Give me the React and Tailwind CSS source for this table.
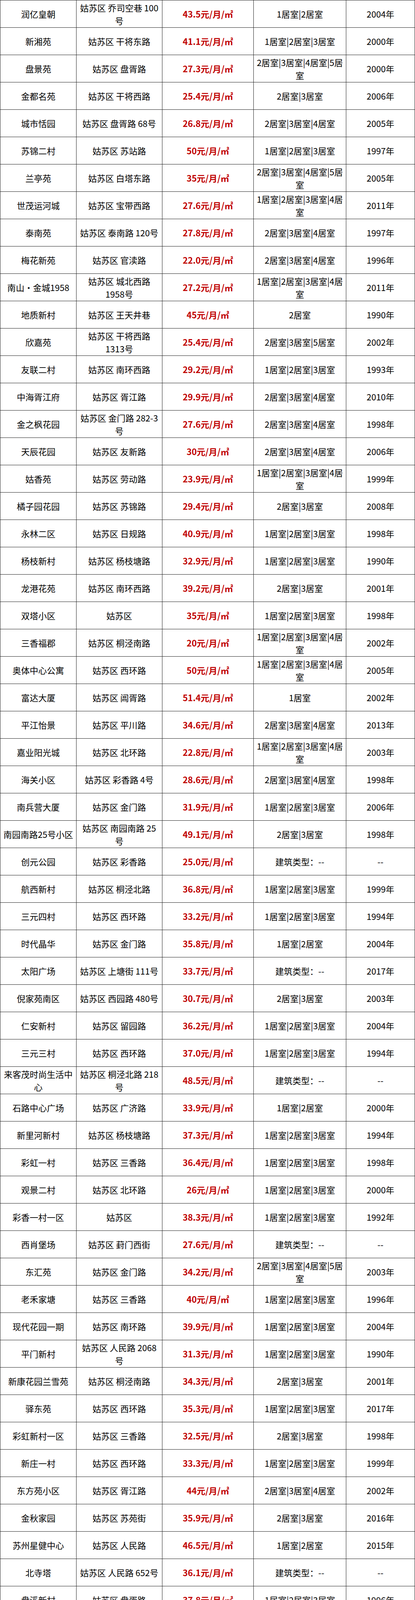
import React from 'react';

// name, address, rent per m², rooms (digits = N居室, otherwise literal), year
const rows = [
  ['润亿皇朝', '姑苏区 乔司空巷 100号', '43.5', '12', '2004'],
  ['新湘苑', '姑苏区 干将东路', '41.1', '123', '2000'],
  ['盘景苑', '姑苏区 盘胥路', '27.3', '2345', '2000'],
  ['金都名苑', '姑苏区 干将西路', '25.4', '23', '2006'],
  ['城市恬园', '姑苏区 盘胥路 68号', '26.8', '234', '2005'],
  ['苏锦二村', '姑苏区 苏站路', '50', '123', '1997'],
  ['兰亭苑', '姑苏区 白塔东路', '35', '2345', '2005'],
  ['世茂运河城', '姑苏区 宝带西路', '27.6', '1234', '2011'],
  ['泰南苑', '姑苏区 泰南路 120号', '27.8', '234', '1997'],
  ['梅花新苑', '姑苏区 官渎路', '22.0', '234', '1996'],
  ['南山·金城1958', '姑苏区 城北西路 1958号', '27.2', '1234', '2011'],
  ['地质新村', '姑苏区 王天井巷', '45', '2', '1990'],
  ['欣嘉苑', '姑苏区 干将西路 1313号', '25.4', '235', '2002'],
  ['友联二村', '姑苏区 南环西路', '29.2', '123', '1993'],
  ['中海胥江府', '姑苏区 胥江路', '29.9', '234', '2010'],
  ['金之枫花园', '姑苏区 金门路 282-3号', '27.6', '234', '1998'],
  ['天辰花园', '姑苏区 友新路', '30', '234', '2006'],
  ['姑香苑', '姑苏区 劳动路', '23.9', '1234', '1999'],
  ['橘子园花园', '姑苏区 苏锦路', '29.4', '23', '2008'],
  ['永林二区', '姑苏区 日规路', '40.9', '123', '1998'],
  ['杨枝新村', '姑苏区 杨枝塘路', '32.9', '123', '1990'],
  ['龙港花苑', '姑苏区 南环西路', '39.2', '23', '2001'],
  ['双塔小区', '姑苏区', '35', '123', '1998'],
  ['三香福郡', '姑苏区 桐泾南路', '20', '1234', '2002'],
  ['奥体中心公寓', '姑苏区 西环路', '50', '1234', '2005'],
  ['富达大厦', '姑苏区 阊胥路', '51.4', '1', '2002'],
  ['平江怡景', '姑苏区 平川路', '34.6', '234', '2013'],
  ['嘉业阳光城', '姑苏区 北环路', '22.8', '1234', '2003'],
  ['海关小区', '姑苏区 彩香路 4号', '28.6', '234', '1998'],
  ['南兵营大厦', '姑苏区 金门路', '31.9', '123', '2006'],
  ['南园南路25号小区', '姑苏区 南园南路 25号', '49.1', '23', '1998'],
  ['创元公园', '姑苏区 彩香路', '25.0', '建筑类型：--', '--'],
  ['航西新村', '姑苏区 桐泾北路', '36.8', '123', '1999'],
  ['三元四村', '姑苏区 西环路', '33.2', '123', '1994'],
  ['时代晶华', '姑苏区 金门路', '35.8', '12', '2004'],
  ['太阳广场', '姑苏区 上塘街 111号', '33.7', '建筑类型：--', '2017'],
  ['倪家苑南区', '姑苏区 西园路 480号', '30.7', '23', '2003'],
  ['仁安新村', '姑苏区 留园路', '36.2', '123', '2004'],
  ['三元三村', '姑苏区 西环路', '37.0', '123', '1994'],
  ['来客茂时尚生活中心', '姑苏区 桐泾北路 218号', '48.5', '建筑类型：--', '--'],
  ['石路中心广场', '姑苏区 广济路', '33.9', '12', '2000'],
  ['新里河新村', '姑苏区 杨枝塘路', '37.3', '123', '1994'],
  ['彩虹一村', '姑苏区 三香路', '36.4', '123', '1998'],
  ['观景二村', '姑苏区 北环路', '26', '123', '2000'],
  ['彩香一村一区', '姑苏区', '38.3', '123', '1992'],
  ['西肖堡场', '姑苏区 葑门西街', '27.6', '建筑类型：--', '--'],
  ['东汇苑', '姑苏区 金门路', '34.2', '2345', '2003'],
  ['老禾家塘', '姑苏区 三香路', '40', '123', '1996'],
  ['现代花园一期', '姑苏区 南环路', '39.9', '123', '2004'],
  ['平门新村', '姑苏区 人民路 2068号', '31.3', '123', '1990'],
  ['新康花园兰雪苑', '姑苏区 桐泾南路', '34.3', '23', '2001'],
  ['驿东苑', '姑苏区 西环路', '35.3', '123', '2017'],
  ['彩虹新村一区', '姑苏区 三香路', '32.5', '23', '1998'],
  ['新庄一村', '姑苏区 西环路', '33.3', '123', '1999'],
  ['东方苑小区', '姑苏区 胥江路', '44', '234', '2002'],
  ['金秋家园', '姑苏区 苏苑街', '35.9', '23', '2016'],
  ['苏州星健中心', '姑苏区 人民路', '46.5', '12', '2015'],
  ['北寺塔', '姑苏区 人民路 652号', '36.1', '建筑类型：--', '--'],
  ['盘溪新村', '姑苏区 盘胥路', '37.8', '123', '1996'],
  ['翠锦苑', '姑苏区', '42.7', '123', '2017'],
  ['胡家浜', '姑苏区 干将西路', '35', '123', '1996'],
  ['彩虹二村', '姑苏区 三香路', '35.9', '23', '1998'],
  ['潼泾新村', '姑苏区 桐泾南路', '37.4', '123', '2000'],
  ['清嘉苑', '姑苏区 洋南路', '27.3', '13', '2014'],
  ['官庄前花园', '姑苏区 友新路', '44.8', '23', '2012'],
  ['菱塘新村一区', '姑苏区 干将西路', '43.8', '123', '1995'],
  ['水韵新苑', '姑苏区 西环路 875号', '33.2', '23', '2015'],
  ['世茂瀚河府', '姑苏区 宝带西路', '35.2', '234', '2014'],
  ['城西教师新村', '姑苏区 友新路', '27', '23', '2000'],
  ['雪枫公寓', '姑苏区 枫桥路', '42.9', '12', '2013'],
  ['世家苑', '姑苏区 宝带西路', '39.6', '234', '2012'],
  ['福马小区', '姑苏区 西环路 2701号', '27', '1234', '2002'],
  ['盘门雅苑', '姑苏区 盘胥路', '29.6', '234', '2000'],
  ['亿博青春汇', '姑苏区 总官堂路', '63.1', '12', '2012'],
  ['赛风公寓', '姑苏区 东阊胥路', '32.8', '12', '2004'],
  ['十全街带城桥下塘', '姑苏区 十全街', '47.3', '建筑类型：--', '--'],
  ['南一村', '姑苏区 广济路', '46.7', '123', '2000'],
  ['人民路131号院', '姑苏区 人民路 131号', '49.3', '--', '--'],
  ['南环东路9号小区', '姑苏区 南环东路 9号', '54.0', '23', '1998'],
  ['万达公寓', '姑苏区 人民路 3188号', '47.4', '--', '--'],
  ['世茂运河城二期', '姑苏区 宝带西路', '40.7', '1234', '2010'],
  ['宝祥苑', '姑苏区 城北西路 2555号', '24.4', '123', '2014'],
  ['园林里南区', '姑苏区 园林路', '28.2', '--', '2004'],
  ['锦邻缘花园', '姑苏区 苏福路', '30.8', '23', '2010'],
  ['花新里小区', '姑苏区 花街巷 15号', '40.6', '--', '--'],
  ['石幢弄社区', '姑苏区', '35.6', '12', '--'],
  ['铁路新三村', '姑苏区 平四路', '39.4', '2', '2000'],
  ['木耳场', '姑苏区 清塘路', '30', '123', '1999'],
  ['葑门', '姑苏区 葑门西街', '36.3', '建筑类型：--', '--'],
  ['三香苑', '姑苏区 三香路', '32.1', '2345', '1999'],
  ['象牙新村', '姑苏区 三香路', '44.8', '123', '2000'],
  ['十梓街3号小区', '姑苏区 十梓街 3号', '36.9', '--', '1995'],
  ['苏州大学北校区', '姑苏区 干将东路', '28.1', '建筑类型：多层', '--'],
  ['彩香一村二区', '姑苏区 干将路', '26.2', '123', '1999'],
  ['阳光城·平江悦', '姑苏区 人民路', '53.0', '123', '--'],
  ['星辉1976产业园', '姑苏区 络香路 2号', '70', '建筑类型：--', '--'],
  ['玻纤路小区', '姑苏区 玻纤路', '26.7', '123', '2000'],
  ['银桥新村', '姑苏区 劳动西路', '33.3', '234', '2000'],
  ['桐馨苑', '姑苏区 桐泾南路 1048号', '28.8', '23', '1998'],
  ['鼎盛花园', '姑苏区 南环路', '25.4', '2345', '2009'],
  ['三香花园', '姑苏区 三香路', '23.4', '2345', '1999'],
  ['西杨安浜', '姑苏区 广济路', '19.2', '建筑类型：--', '--'],
  ['广济公寓', '姑苏区 广济路 575号', '31.3', '23', '1997'],
  ['和园小筑', '姑苏区 和园路 55号', '20', '2345', '2000'],
  ['葑门草鞋湾', '姑苏区 葑门路', '32.9', '建筑类型：--', '--'],
  ['利景华庭', '姑苏区', '35.9', '23', '2000'],
  ['E公馆', '姑苏区 金储街', '42.9', '12', '2018'],
  ['润园', '姑苏区 百家巷 32号', '36.1', '建筑类型：--', '--'],
  ['世茂·瀚河苑', '姑苏区 太湖西路', '37.4', '234', '2015'],
  ['新康花园六期', '姑苏区 桐泾南路 181号', '39.7', '123', '2006'],
  ['和美社区', '姑苏区 虎池路', '35.1', '23', '2014'],
];

const roomText = (r) =>
  /^\d+$/.test(r) ? r.split('').map((n) => `${n}居室`).join('|') : r;

const yearText = (y) => (y === '--' ? '--' : `${y}年`);

const Cell = ({ children, className = '' }) => (
  <div
    className={`flex items-center justify-center text-center px-[6px] leading-[33px] border-r border-b border-[#222] ${className}`}
  >
    {children}
  </div>
);

export default function App() {
  return (
    <div
      className="w-[1063px] bg-white border-l border-t border-[#222] text-[22px] text-black"
      style={{ fontFamily: '"Noto Sans CJK SC", "Noto Sans", sans-serif' }}
    >
      {rows.map(([name, addr, price, rooms, year], i) => (
        <div
          key={i}
          className="grid grid-cols-[195px_220px_234px_237px_176px] h-[70px]"
        >
          <Cell>{name}</Cell>
          <Cell>{addr}</Cell>
          <Cell className="font-bold text-[#c00000]">{price}元/月/㎡</Cell>
          <Cell>{roomText(rooms)}</Cell>
          <Cell>{yearText(year)}</Cell>
        </div>
      ))}
    </div>
  );
}
